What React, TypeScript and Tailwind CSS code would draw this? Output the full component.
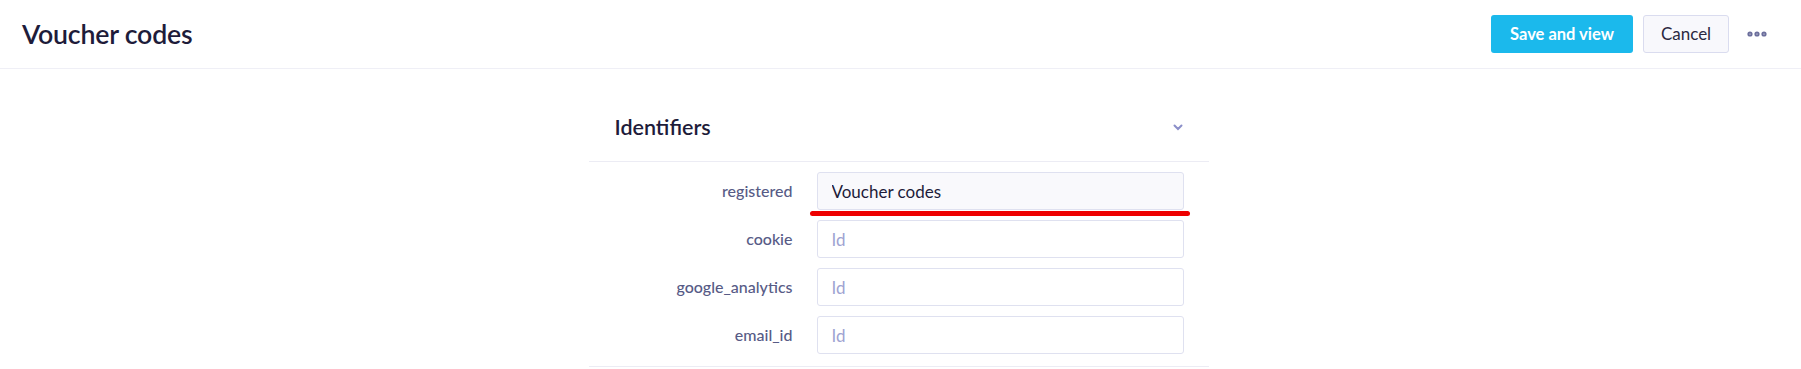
import { MoreHorizontal } from 'lucide-react';

const rows = [
  { label: 'registered', value: 'Voucher codes' },
  { label: 'cookie', value: '' },
  { label: 'google_analytics', value: '' },
  { label: 'email_id', value: '' },
];

export default function App() {
  return (
    <div className="min-h-[369px] bg-white font-['Lato',sans-serif] text-[#1e1c3a]">
      <header className="flex h-[69px] items-center justify-between border-b border-[#efeff6] pl-[22px] pr-[32px]">
        <h1 className="text-[26.7px] font-semibold leading-none tracking-[-0.2px]">Voucher codes</h1>
        <div className="flex items-center">
          <button
            type="button"
            className="h-[38px] w-[142px] rounded-[3px] bg-[#1bb9ec] text-[16.5px] font-bold text-white"
          >
            Save and view
          </button>
          <button
            type="button"
            className="ml-[10px] h-[38px] w-[86px] rounded-[3px] border border-[#dadcef] bg-[#f8f8fc] text-[17px] text-[#2a2840]"
          >
            Cancel
          </button>
          <span className="ml-[16px] flex w-[24px] justify-center text-[#6b6e9c]">
            <MoreHorizontal size={24} strokeWidth={3.2} />
          </span>
        </div>
      </header>

      <section className="mx-auto w-[620px] -translate-x-[2px] border-b border-[#ececf4]">
        <div className="flex h-[93px] items-center justify-between border-b border-[#ececf4] pl-[26px] pr-[26px] pt-[24px]">
          <h2 className="text-[21.5px] font-semibold text-[#1e1c3a]">Identifiers</h2>
          <svg width="10" height="7" viewBox="0 0 10 7" className="text-[#8b8fc9]">
            <path d="M1.5 1.5 L5 5 L8.5 1.5" fill="none" stroke="currentColor" strokeWidth="2" strokeLinecap="round" />
          </svg>
        </div>
        <div className="flex flex-col gap-[10px] pb-[12px] pt-[10px]">
          {rows.map((row, i) => (
            <div key={row.label} className="flex items-center">
              <label className="w-[204px] text-right text-[16px] font-medium text-[#575b86]">{row.label}</label>
              <div className="relative ml-[24px] w-[367px]">
                <input
                  readOnly
                  value={row.value}
                  placeholder="Id"
                  className={`h-[38px] w-full rounded-[3px] border border-[#dfe1f0] px-[14px] text-[17px] text-[#1e1c3a] outline-none placeholder:text-[#9ea3d2] ${
                    i === 0 ? 'bg-[#f9f9fc]' : 'bg-white'
                  }`}
                />
                {i === 0 ? (
                  <span className="absolute left-[-7px] right-[-6px] top-[39px] h-[5px] rounded-full bg-[#ee0000]" />
                ) : null}
              </div>
            </div>
          ))}
        </div>
      </section>
    </div>
  );
}
